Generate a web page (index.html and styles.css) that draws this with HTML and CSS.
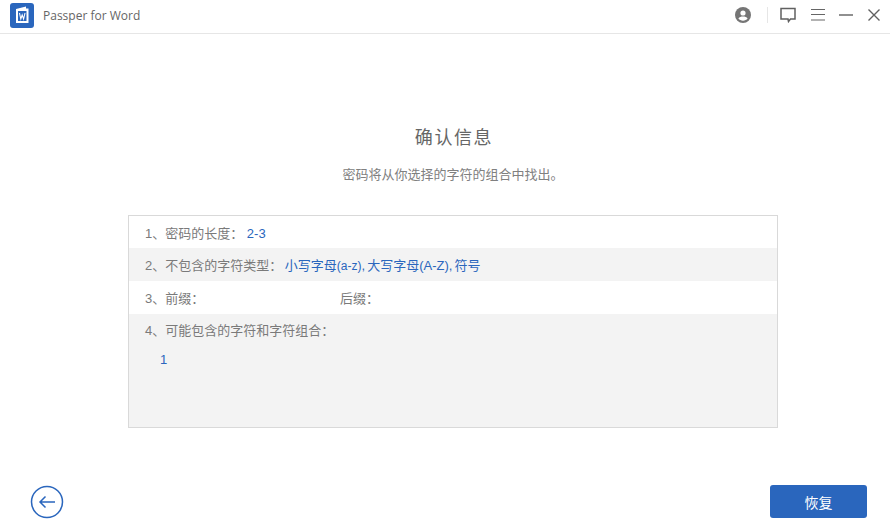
FILE: index.html
```html
<!DOCTYPE html>
<html lang="zh-CN">
<head>
<meta charset="utf-8">
<title>Passper for Word</title>
<link rel="stylesheet" href="styles.css">
</head>
<body>
<div class="app">
  <header class="titlebar">
    <div class="brand">
      <svg class="logo" width="24" height="25" viewBox="0 0 24 25">
        <rect width="24" height="25" rx="3" fill="#2a66bd"/>
        <path d="M6 6 16 3.5V5.5H18.5V20H6Z" fill="#fff"/>
        <path d="M8 8H16.5V18H8Z" fill="#2a66bd"/>
        <path d="M9.5 10 10.8 16 12.2 12 13.6 16 15 10" fill="none" stroke="#fff" stroke-width="1.1"/>
      </svg>
      <span class="appname">Passper for Word</span>
    </div>
    <div class="tools">
      <svg class="user" width="16" height="16" viewBox="0 0 16 16">
        <circle cx="8" cy="8" r="8" fill="#757575"/>
        <circle cx="8" cy="6" r="2.6" fill="#fff"/>
        <path d="M3.4 11.6C4.4 9.9 6 9.5 8 9.5S11.6 9.9 12.6 11.6C11.5 13 9.9 13.7 8 13.7S4.5 13 3.4 11.6Z" fill="#fff"/>
      </svg>
      <span class="sep"></span>
      <svg class="tool-chat" width="16" height="16" viewBox="0 0 16 16">
        <path d="M1 1.5H15V12H10.5L8.5 14.5 8 12H1Z" fill="none" stroke="#606060" stroke-width="1.5"/>
      </svg>
      <svg class="tool-menu" width="14" height="14" viewBox="0 0 14 14">
        <path d="M0 1.5H14M0 6.5H14M0 12H14" stroke="#666" stroke-width="1.2"/>
      </svg>
      <svg class="tool-min" width="14" height="14" viewBox="0 0 14 14">
        <path d="M0 7H14" stroke="#606060" stroke-width="1.4"/>
      </svg>
      <svg class="tool-close" width="14" height="14" viewBox="0 0 14 14">
        <path d="M1.5 1.5 12.5 12.5M12.5 1.5 1.5 12.5" stroke="#606060" stroke-width="1.4"/>
      </svg>
    </div>
  </header>
  <main class="content">
    <h1 class="heading">确认信息</h1>
    <p class="sub">密码将从你选择的字符的组合中找出。</p>
    <section class="panel">
      <div class="row first">1、密码的长度： <span class="val val-len">2-3</span></div>
      <div class="row shade">2、不包含的字符类型： <span class="val val-types">小写字母<span class="narrow">(a-z)</span>, 大写字母(A-Z), 符号</span></div>
      <div class="row"><span class="prefix">3、前缀：</span><span>后缀：</span></div>
      <div class="shade fill">
        <div class="combo-label">4、可能包含的字符和字符组合：</div>
        <div class="val combo">1</div>
      </div>
    </section>
  </main>
  <footer class="actions">
    <svg class="back" width="34" height="34" viewBox="0 0 34 34">
      <circle cx="17" cy="17" r="15.5" fill="none" stroke="#2a66bd" stroke-width="1.5"/>
      <path d="M25 17H10M15.5 11.5 10 17 15.5 22.5" fill="none" stroke="#2a66bd" stroke-width="1.5"/>
    </svg>
    <button class="recover">恢复</button>
  </footer>
</div>
</body>
</html>
```
FILE: styles.css
```css
* { box-sizing: border-box; }
html, body { margin: 0; height: 100%; }
body {
  background: #fff;
  color: #7a7a7a;
  font-family: "Liberation Sans", "Noto Sans CJK SC", sans-serif;
  font-size: 13px;
}
.app { width: 890px; height: 532px; display: flex; flex-direction: column; overflow: hidden; }
.titlebar {
  height: 34px;
  flex: none;
  border-bottom: 1px solid #e6e6e6;
  display: flex;
  justify-content: space-between;
  align-items: center;
  padding: 0 9px 3px 10px;
}
.brand { display: flex; align-items: center; gap: 9px; }
.appname { font-family: "Open Sans", sans-serif; font-size: 12px; color: #666; }
.tools { display: flex; align-items: center; }
.sep { width: 1px; height: 16px; background: #e6e6e6; margin: 0 12px 0 16px; }
.user { margin-left: -1px; }
.tool-menu { margin-left: 15px; }
.tool-min { margin-left: 14px; }
.tool-close { margin-left: 14px; }
.content { flex: none; height: 428px; display: flex; flex-direction: column; align-items: center; padding: 92px 0 0 16px; }
.heading { margin: 0; padding-left: 2px; font-size: 18px; font-weight: normal; line-height: 24px; letter-spacing: 1.6px; color: #666; }
.sub { margin: 14px 0 0; font-size: 13px; line-height: 22px; color: #808080; }
.panel {
  width: 650px;
  height: 213px;
  margin-top: 29px;
  border: 1px solid #d9d9d9;
  display: flex;
  flex-direction: column;
}
.row, .combo-label { height: 33px; flex: none; padding: 0 16px; line-height: 33px; white-space: pre; }
.row { line-height: 35px; }
.first { height: 32px; }
.shade { background: #f3f3f3; }
.fill { flex: 1; }
.prefix { display: inline-block; width: 195px; }
.val { color: #2a66bd; }
.val-len { margin-left: 0; }
.val-types { margin-left: -1px; word-spacing: -1.5px; }
.narrow { font-size: 12px; }
.combo { padding-left: 31px; line-height: 22px; margin-top: 2px; }
.actions { flex: 1; display: flex; justify-content: space-between; align-items: flex-start; padding: 23px 23px 0 30px; }
.recover {
  width: 97px;
  height: 33px;
  border: 0;
  border-radius: 3px;
  background: #2a66bd;
  color: #fff;
  font: 14px "Liberation Sans", "Noto Sans CJK SC", sans-serif;
}
```
